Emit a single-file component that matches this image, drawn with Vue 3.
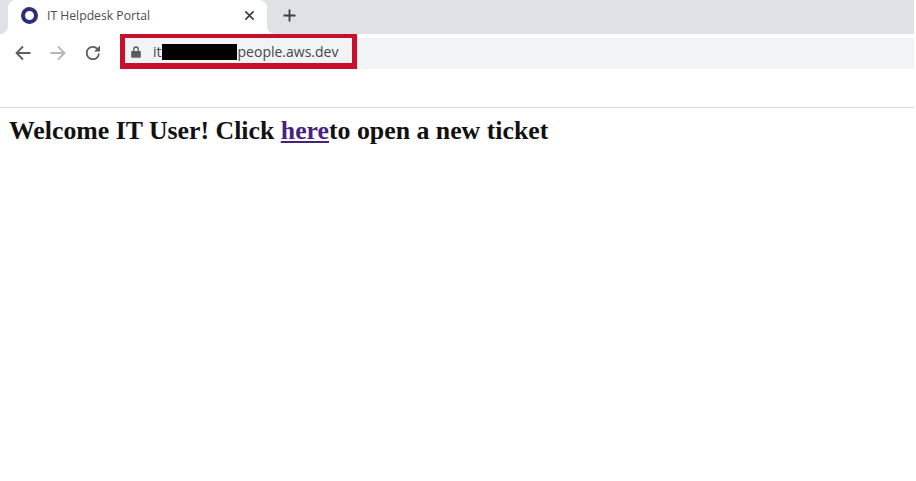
<script setup>
const title = 'IT Helpdesk Portal'
</script>

<template>
  <div class="page">
    <div class="tabstrip">
      <div class="tab">
        <span class="favicon"></span>
        <span class="tabtitle">{{ title }}</span>
        <svg class="close" viewBox="0 0 12 12"><path d="M1.5 1.5l9 9M10.5 1.5l-9 9" /></svg>
      </div>
      <svg class="plus" viewBox="0 0 14 14"><path d="M7 0.5v13M0.5 7h13" /></svg>
    </div>
    <div class="toolbar">
      <div class="nav">
        <svg class="navicon" viewBox="0 0 18 18"><path d="M16.5 9H2.5M9 2.5L2.5 9L9 15.500" /></svg>
        <svg class="navicon fwd" viewBox="0 0 18 18"><path d="M1.5 9H15.500M9 2.5L15.500 9L9 15.500" /></svg>
        <svg class="navicon" viewBox="0 0 18 18"><path d="M15 9.500A6.200 6.200 0 1 1 13.200 4.600" /><path class="solid" d="M16 1.500V7.500H10Z" /></svg>
      </div>
      <div class="omnibox">
        <div class="highlight">
          <svg class="lock" viewBox="0 0 10 12"><path class="solid" d="M1 5h8a.8.8 0 0 1 .8.8v5.200a.8.8 0 0 1-.8.8H1a.8.8 0 0 1-.8-.8V5.800a.8.8 0 0 1 .8-.8Z" /><path d="M2.800 5V3.200a2.200 2.200 0 0 1 4.400 0V5" /></svg>
          <span class="url">it<span class="redact"></span>people.aws.dev</span>
        </div>
      </div>
    </div>
    <div class="content">
      <h2 class="welcome">Welcome IT User! Click <a class="link">here</a>to open a new ticket</h2>
    </div>
  </div>
</template>

<style scoped>
.page {
  width: 914px;
  height: 481px;
  background: #fff;
  overflow: hidden;
  display: flex;
  flex-direction: column;
}
.tabstrip {
  height: 34px;
  flex: none;
  background: #dee1e6;
  display: flex;
  align-items: center;
  padding-left: 8px;
  box-sizing: border-box;
}
.tab {
  position: relative;
  width: 259px;
  height: 34px;
  background: #fff;
  border-radius: 8px 8px 0 0;
  display: flex;
  align-items: center;
  padding: 0 12px 3px 13px;
  box-sizing: border-box;
}
.tab::before,
.tab::after {
  content: "";
  position: absolute;
  bottom: 0;
  width: 8px;
  height: 8px;
}
.tab::before {
  left: -8px;
  background: radial-gradient(circle at 0 0, #dee1e6 7.500px, #fff 8.500px);
}
.tab::after {
  right: -8px;
  background: radial-gradient(circle at 100% 0, #dee1e6 7.500px, #fff 8.500px);
}
.favicon {
  width: 17px;
  height: 17px;
  border: 4px solid #2b2f77;
  border-radius: 50%;
  box-sizing: border-box;
  flex: none;
}
.tabtitle {
  margin-left: 9px;
  flex: 1;
  font: 12.200px "Open Sans", "Liberation Sans", sans-serif;
  color: #4a4d51;
}
.close {
  width: 11px;
  height: 11px;
  fill: none;
  stroke: #3c4043;
  stroke-width: 1.800;
}
.plus {
  width: 13px;
  height: 13px;
  margin-left: 16px;
  margin-bottom: 3px;
  fill: none;
  stroke: #3c4043;
  stroke-width: 2;
}
.toolbar {
  height: 74px;
  flex: none;
  border-bottom: 1px solid #dcdcdc;
  box-sizing: border-box;
  display: flex;
  align-items: flex-start;
}
.nav {
  display: flex;
  align-items: center;
  gap: 17px;
  width: 120px;
  flex: none;
  padding: 10px 0 0 14px;
  box-sizing: border-box;
}
.navicon {
  width: 18px;
  height: 18px;
  fill: none;
  stroke: #5a5e62;
  stroke-width: 1.800;
}
.navicon.fwd {
  stroke: #b4b7ba;
}
.solid {
  fill: #5a5e62;
  stroke: none;
}
.omnibox {
  flex: 1;
  margin-top: 4px;
  height: 31px;
  background: #f1f3f4;
}
.highlight {
  width: 237px;
  height: 35px;
  margin-top: -4px;
  border-style: solid;
  border-color: #c8102e;
  border-width: 4px 5px 6px;
  box-sizing: border-box;
  display: flex;
  align-items: center;
  padding: 2px 0 0 6px;
  background: #f1f3f4;
}
.lock {
  width: 10px;
  height: 12px;
  fill: none;
  stroke: #5a5e62;
  stroke-width: 1.300;
  flex: none;
}
.url {
  margin-left: 12px;
  font: 14px "Open Sans", "Liberation Sans", sans-serif;
  color: #45484c;
  display: flex;
  align-items: center;
  white-space: nowrap;
}
.redact {
  width: 75px;
  height: 16px;
  margin-right: 1px;
  background: #000;
}
.content {
  padding: 8px 0 0 9px;
}
.welcome {
  margin: 0;
  font: bold 25.800px "Liberation Serif", serif;
  color: #111;
  white-space: nowrap;
}
.link {
  color: #46237f;
  text-decoration: underline;
}
</style>
